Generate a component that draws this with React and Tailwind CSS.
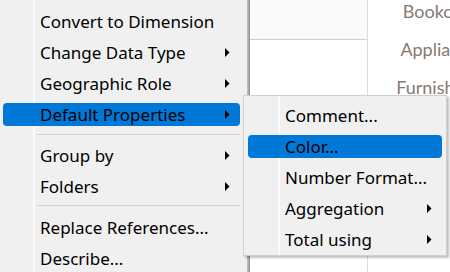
import React from "react";
import clsx from "clsx";

const mainItems = [
  { label: "Convert to Dimension" },
  { label: "Change Data Type", arrow: true },
  { label: "Geographic Role", arrow: true },
  { label: "Default Properties", arrow: true, active: true },
  { sep: true, top: "pt-[4px] pb-[5px]" },
  { label: "Group by", arrow: true },
  { label: "Folders", arrow: true },
  { sep: true, top: "pt-[3px] pb-[6px]" },
  { label: "Replace References..." },
  { label: "Describe..." },
];

const subItems = [
  { label: "Comment..." },
  { label: "Color...", active: true },
  { label: "Number Format..." },
  { label: "Aggregation", arrow: true },
  { label: "Total using", arrow: true },
];

function Arrow() {
  return (
    <svg width="5" height="9" viewBox="0 0 5 9" className="shrink-0">
      <polygon points="0,0 4.5,4.5 0,9" fill="#000" />
    </svg>
  );
}

function Item({ label, arrow, active }) {
  return (
    <div className="h-[31px] flex items-center">
      <div
        className={clsx(
          "h-[23px] w-full flex items-center rounded-[4px] pl-[37px] pr-[10px]",
          active && "bg-[#0078d7]"
        )}
      >
        <span className="flex-1 whitespace-nowrap text-black">{label}</span>
        {arrow && <Arrow />}
      </div>
    </div>
  );
}

export default function App() {
  return (
    <div className="relative w-[450px] h-[272px] overflow-hidden bg-white flex font-['Noto_Sans',sans-serif] text-[17px]">
      {/* context menu */}
      <div className="w-[247px] shrink-0 h-full pt-[6px] pl-[3px] pr-[7px] bg-[linear-gradient(to_right,#f0f0f0_33px,#fbfbfb_33px,#fbfbfb_35px,#f0f0f0_35px)]">
        {mainItems.map((it, i) =>
          it.sep ? (
            <div key={i} className={it.top}>
              <div className="ml-[33px] h-px bg-[#d4d4d4]" />
            </div>
          ) : (
            <Item key={i} {...it} />
          )
        )}
      </div>

      {/* window behind the menu */}
      <div className="w-[3px] shrink-0 h-full bg-[linear-gradient(to_right,#c4c4c4,#8f8f8f)]" />
      <div className="w-[118px] shrink-0 h-full border-r border-[#dcdcdc]">
        <div className="h-[40px] bg-[#fafafa] border-b border-[#d0d0d0]" />
      </div>
      <div className="w-[118px] shrink-0 h-full text-right text-[#857a72] font-['Lato',sans-serif] text-[18px]">
        <div className="h-[38px] flex items-center justify-end whitespace-nowrap -mt-[8px]">Bookcases</div>
        <div className="h-[38px] flex items-center justify-end whitespace-nowrap">Appliances</div>
        <div className="h-[38px] flex items-center justify-end whitespace-nowrap">Furnishings</div>
      </div>

      {/* submenu */}
      <div className="absolute left-[243px] top-[95px] w-[204px] border border-[#cfcfcf] pt-[4px] px-[4px] shadow-[2px_2px_2px_rgba(0,0,0,0.25)] bg-[linear-gradient(to_right,#f0f0f0_34px,#fbfbfb_34px,#fbfbfb_36px,#f0f0f0_36px)]">
        {subItems.map((it, i) => (
          <Item key={i} {...it} />
        ))}
      </div>
    </div>
  );
}
